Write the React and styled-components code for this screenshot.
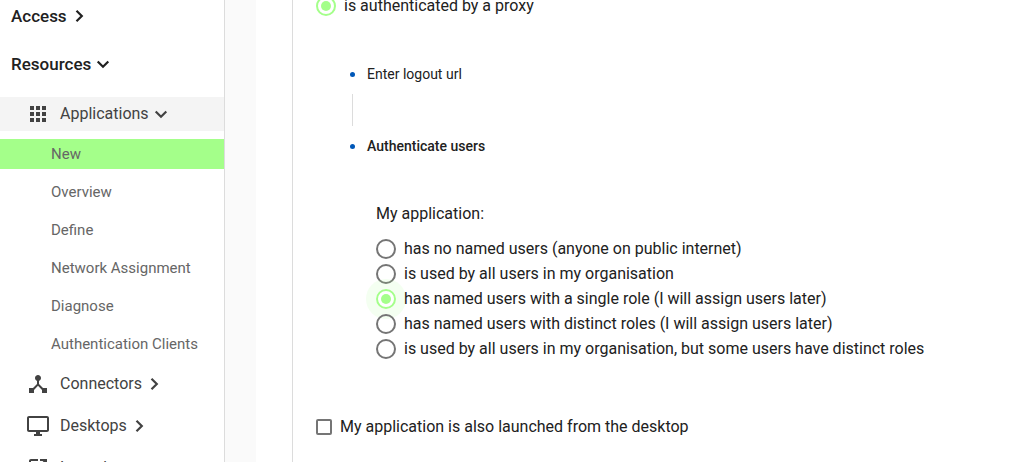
import styled, { createGlobalStyle } from 'styled-components';

/* global */
const GlobalStyle = createGlobalStyle`
    * {
        box-sizing: border-box;
    }
    body {
        margin: 0;
        overflow: hidden;
        background: #fff;
        color: #212121;
        font-family: Roboto, 'Open Sans', sans-serif;
        font-size: 16px;
    }
`;

/* layout */
const Page = styled.div`
    display: flex;
    height: 100vh;
    overflow: hidden;
`;
const Sidebar = styled.nav`
    flex: 0 0 225px;
    border-right: 1px solid #dcdcdc;
    background: #fff;
    overflow: hidden;
`;
const Content = styled.main`
    flex: 1;
    min-width: 0;
    padding-left: 31px;
    background: #fafafa;
    overflow: hidden;
`;
const Panel = styled.div`
    padding-left: 36px;
    background: #fff;
`;
const StepBody = styled.div`
    display: flow-root;
    min-height: 100vh;
    padding-left: 23px;
    border-left: 1px solid #dcdcdc;
`;

/* sidebar */
const SectionButton = styled.button`
    display: flex;
    align-items: center;
    gap: 5px;
    width: 100%;
    height: 32px;
    margin-bottom: 16px;
    padding: 0 11px;
    border: 0;
    background: none;
    color: #212121;
    font: 500 17px Roboto, sans-serif;
`;
const GroupList = styled.ul`
    display: flex;
    flex-direction: column;
    gap: 8px;
    margin: 0;
    padding: 1px 0 0;
    list-style: none;
`;
const GroupButton = styled.button`
    display: flex;
    align-items: center;
    width: 100%;
    height: 34px;
    padding: 0 0 0 26px;
    border: 0;
    background: ${({ $open }) => ($open ? '#f4f4f4' : 'none')};
    color: #424242;
    font: 400 16px Roboto, sans-serif;
`;
const GroupIcon = styled.svg`
    width: 24px;
    height: 24px;
    margin-right: 10px;
    fill: #424242;
`;
const Chevron = styled.svg`
    width: 14px;
    height: 14px;
    fill: none;
    stroke: currentColor;
    stroke-width: 2.2;
`;
const GroupLabel = styled.span`
    margin-right: 5px;
    padding-bottom: 2px;
`;
const SubList = styled.ul`
    display: flex;
    flex-direction: column;
    gap: 8px;
    margin: 8px 0 0;
    padding: 0;
    list-style: none;
`;
const SubLink = styled.a`
    display: block;
    height: 30px;
    padding-left: 51px;
    background: ${({ $active }) => ($active ? '#a4ff8a' : 'none')};
    color: #666;
    font-size: 15px;
    line-height: 30px;
    text-decoration: none;
`;

/* form */
const RadioLabel = styled.label`
    display: flex;
    align-items: center;
    gap: 8px;
    height: 25px;
`;
const TopChoice = styled.div`
    margin-top: -7px;
`;
const Radio = styled.input`
    appearance: none;
    display: grid;
    place-items: center;
    flex: none;
    width: 20px;
    height: 20px;
    margin: 0;
    border: 2px solid #757575;
    border-radius: 50%;

    &:checked {
        border-color: #a4ff8a;
        box-shadow: ${({ $halo }) => ($halo ? '0 0 0 10px rgba(164, 255, 138, 0.12)' : 'none')};
    }
    &:checked::before {
        content: '';
        width: 10px;
        height: 10px;
        border-radius: 50%;
        background: #a4ff8a;
    }
`;
const Steps = styled.ul`
    margin: 0;
    padding: 44px 0 0 34px;
    list-style: none;
`;
const StepTitle = styled.div`
    display: flex;
    align-items: center;
    gap: 12px;
    height: 24px;
    font-size: 14px;
    font-weight: ${({ $current }) => ($current ? 500 : 400)};

    &::before {
        content: '';
        width: 5px;
        height: 5px;
        border-radius: 50%;
        background: #0057b8;
    }
`;
const StepLine = styled.div`
    height: 32px;
    margin: 8px 0 8px 2px;
    border-left: 1px solid #dcdcdc;
`;
const Choices = styled.fieldset`
    min-width: 0;
    margin: 44px 0 0;
    padding: 0 0 0 26px;
    border: 0;
`;
const Question = styled.legend`
    padding: 0 0 10px;
    line-height: 24px;
`;
const CheckLabel = styled.label`
    display: flex;
    align-items: center;
    gap: 8px;
    margin-top: 54px;
    line-height: 24px;
`;
const Checkbox = styled.input`
    appearance: none;
    width: 16px;
    height: 16px;
    margin: 0;
    border: 2px solid #757575;
    border-radius: 2px;
`;

const options = [
    'has no named users (anyone on public internet)',
    'is used by all users in my organisation',
    'has named users with a single role (I will assign users later)',
    'has named users with distinct roles (I will assign users later)',
    'is used by all users in my organisation, but some users have distinct roles',
];

const subPages = ['New', 'Overview', 'Define', 'Network Assignment', 'Diagnose', 'Authentication Clients'];

const icons = {
    apps: 'M4 8h4V4H4v4zm6 12h4v-4h-4v4zm-6 0h4v-4H4v4zm0-6h4v-4H4v4zm6 0h4v-4h-4v4zm6-10v4h4V4h-4zm-6 4h4V4h-4v4zm6 6h4v-4h-4v4zm0 6h4v-4h-4v4z',
    hub: 'M17 16l-4-4V8.82C14.16 8.4 15 7.3 15 6c0-1.66-1.34-3-3-3S9 4.34 9 6c0 1.3.84 2.4 2 2.82V12l-4 4H3v5h5v-3.05l4-4.2 4 4.2V21h5v-5h-4z',
    desktop: 'M21 2H3c-1.1 0-2 .9-2 2v12c0 1.1.9 2 2 2h7v2H8v2h8v-2h-2v-2h7c1.1 0 2-.9 2-2V4c0-1.1-.9-2-2-2zm0 14H3V4h18v12z',
    launch: 'M19 19H5V5h7V3H5c-1.11 0-2 .9-2 2v14c0 1.1.89 2 2 2h14c1.1 0 2-.9 2-2v-7h-2v7zM14 3v2h3.59l-9.83 9.83 1.41 1.41L19 6.41V10h2V3h-7z',
};

function Arrow({ open }) {
    return (
        <Chevron viewBox="0 0 14 14" aria-hidden="true">
            <path d={open ? 'M1.7 4.5L7 9.8l5.3-5.3' : 'M4.5 1.7L9.8 7l-5.3 5.3'} />
        </Chevron>
    )
}

function Group({ icon, label, open, children }) {
    return (
        <li>
            <GroupButton type="button" $open={open} aria-expanded={!!open}>
                <GroupIcon viewBox="0 0 24 24" aria-hidden="true">
                    <path d={icons[icon]} />
                </GroupIcon>
                <GroupLabel>{label}</GroupLabel>
                <Arrow open={open} />
            </GroupButton>
            {children}
        </li>
    )
}

function App() {
    return (
        <Page>
            <GlobalStyle />
            <Sidebar>
                <SectionButton type="button">Access <Arrow /></SectionButton>
                <SectionButton type="button">Resources <Arrow open /></SectionButton>
                <GroupList>
                    <Group icon="apps" label="Applications" open>
                        <SubList>
                            {subPages.map((name) => (
                                <li key={name}>
                                    <SubLink href="#" $active={name === 'New'}>{name}</SubLink>
                                </li>
                            ))}
                        </SubList>
                    </Group>
                    <Group icon="hub" label="Connectors" />
                    <Group icon="desktop" label="Desktops" />
                    <Group icon="launch" label="Launchers" />
                </GroupList>
            </Sidebar>
            <Content>
                <Panel>
                    <StepBody>
                        <TopChoice>
                            <RadioLabel>
                                <Radio type="radio" name="access" defaultChecked />
                                is authenticated by a proxy
                            </RadioLabel>
                        </TopChoice>
                        <Steps>
                            <li>
                                <StepTitle>Enter logout url</StepTitle>
                                <StepLine />
                            </li>
                            <li>
                                <StepTitle $current>Authenticate users</StepTitle>
                                <Choices>
                                    <Question>My application:</Question>
                                    {options.map((text, i) => (
                                        <RadioLabel key={text}>
                                            <Radio type="radio" name="users" $halo defaultChecked={i === 2} />
                                            {text}
                                        </RadioLabel>
                                    ))}
                                </Choices>
                            </li>
                        </Steps>
                        <CheckLabel>
                            <Checkbox type="checkbox" />
                            My application is also launched from the desktop
                        </CheckLabel>
                    </StepBody>
                </Panel>
            </Content>
        </Page>
    )
}

export default App;
